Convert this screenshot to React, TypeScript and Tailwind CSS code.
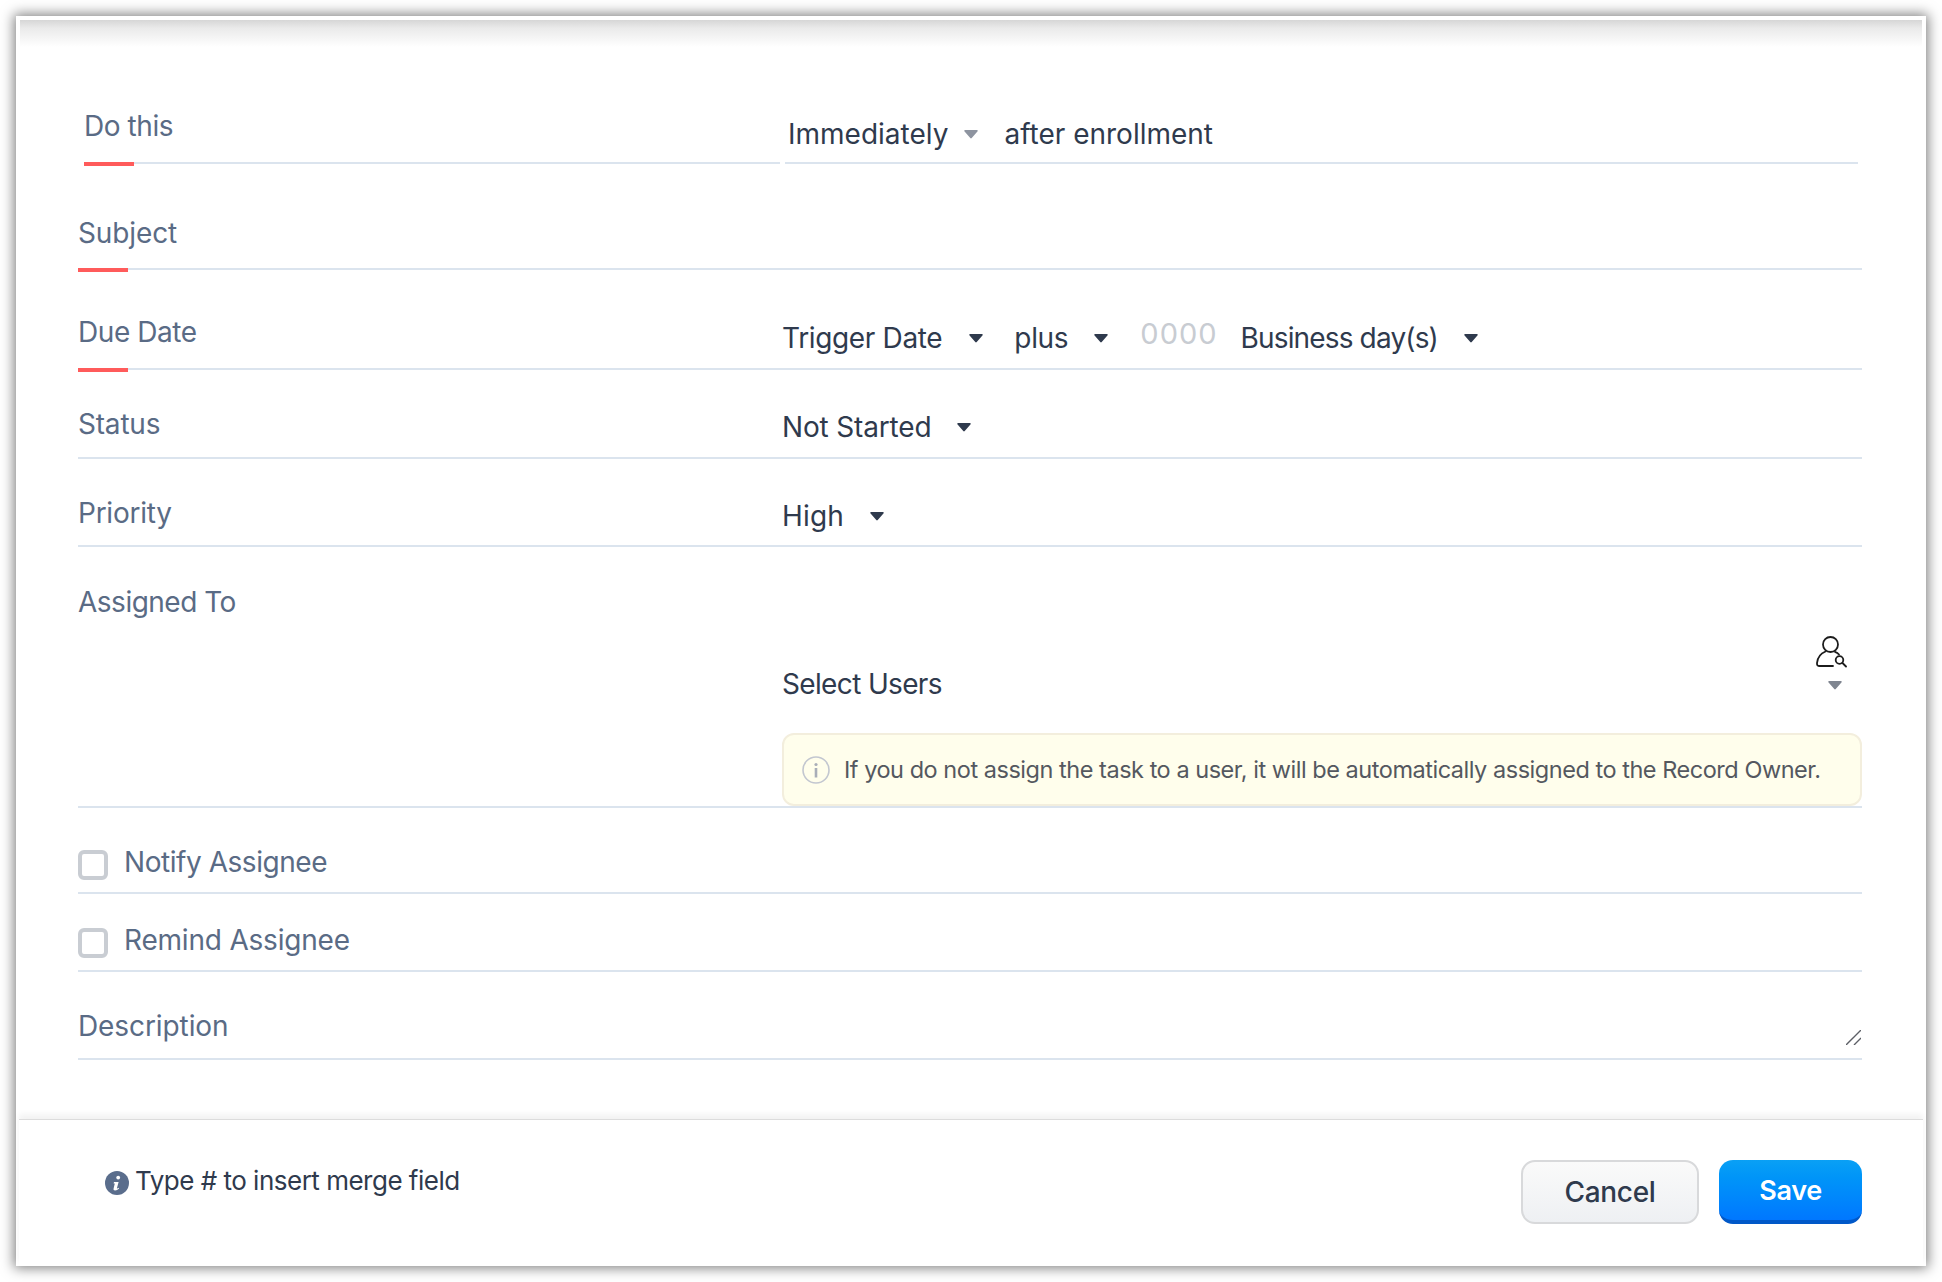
import React from 'react';

const Caret = ({ className = 'text-[#55647f]' }: { className?: string }) => (
  <svg viewBox="0 0 16 11" className={`h-[10px] w-[16px] shrink-0 ${className}`}>
    <path d="M1.5 1h13a1 1 0 0 1 .8 1.6L8.8 10a1 1 0 0 1-1.6 0L.7 2.6A1 1 0 0 1 1.5 1z" fill="currentColor" />
  </svg>
);

const RedBar = () => <div className="absolute bottom-[-4px] left-0 h-[4px] w-[50px] bg-[#ff5b5b]" />;

const Label = ({ children, className }: { children: React.ReactNode; className: string }) => (
  <div className={`w-[704px] shrink-0 text-[#5a6b85] ${className}`}>{children}</div>
);

const Checkbox = () => <div className="mr-[16px] h-[30px] w-[30px] shrink-0 rounded-[6px] border-4 border-[#c9cdd3] bg-white" />;

const App = () => {
  return (
    <div className="h-[1282px] w-[1942px] overflow-hidden bg-white pt-[16px] pl-[16px] font-['Inter',sans-serif] text-[28px] leading-[32px] tracking-[-0.3px]">
      <div className="flex h-[1250px] w-[1910px] flex-col bg-white shadow-[0_0_12px_2px_rgba(0,0,0,0.5)]">
        <div className="mx-[4px] mt-[4px] h-[27px] shrink-0 bg-gradient-to-b from-[#d6d6d6] via-[#eaeaea] via-30% to-white" />

        <div className="flex-1 pr-[64px] pl-[62px]">
          {/* Do this */}
          <div className="flex h-[117px] pr-[4px] pl-[6px]">
            <div className="relative w-[696px] shrink-0 border-b-2 border-[#dbe4ee] pt-[63px] tracking-[-0.42px] text-[#5a6b85]">
              Do this
              <RedBar />
            </div>
            <div className="ml-[5px] flex flex-1 items-start border-b-2 border-[#dbe4ee] pt-[71px] pl-[3px] tracking-normal text-[#2f3a4d]">
              <span>Immediately</span>
              <Caret className="mt-[11px] ml-[15px] text-[#8e94a0]" />
              <span className="ml-[25px]">after enrollment</span>
            </div>
          </div>

          {/* Subject */}
          <div className="relative h-[106px] border-b-2 border-[#dbe4ee] pt-[53px] tracking-[-0.12px] text-[#5a6b85]">
            Subject
            <RedBar />
          </div>

          {/* Due Date */}
          <div className="relative flex h-[100px] border-b-2 border-[#dbe4ee] text-[#2f3a4d]">
            <Label className="pt-[46px] tracking-[-0.42px]">Due Date</Label>
            <div className="flex items-start pt-[52px]">
              <span className="tracking-[-0.35px]">Trigger Date</span>
              <Caret className="mt-[11px] ml-[26px]" />
              <span className="ml-[30px]">plus</span>
              <Caret className="mt-[11px] ml-[25px]" />
              <span className="mt-[-4px] ml-[31px] text-[29px] tracking-[1px] text-[#c8ccd2]">0000</span>
              <span className="ml-[23px] tracking-[-0.85px]">Business day(s)</span>
              <Caret className="mt-[11px] ml-[25px]" />
            </div>
            <RedBar />
          </div>

          {/* Status */}
          <div className="flex h-[89px] border-b-2 border-[#dbe4ee] text-[#2f3a4d]">
            <Label className="pt-[38px] tracking-[-0.2px]">Status</Label>
            <div className="flex items-start pt-[41px]">
              <span className="tracking-[-0.16px]">Not Started</span>
              <Caret className="mt-[11px] ml-[25px]" />
            </div>
          </div>

          {/* Priority */}
          <div className="flex h-[88px] border-b-2 border-[#dbe4ee] text-[#2f3a4d]">
            <Label className="pt-[38px] tracking-[-0.25px]">Priority</Label>
            <div className="flex items-start pt-[41px]">
              <span className="tracking-[0.2px]">High</span>
              <Caret className="mt-[11px] ml-[25px]" />
            </div>
          </div>

          {/* Assigned To */}
          <div className="flex h-[261px] border-b-2 border-[#dbe4ee] text-[#2f3a4d]">
            <Label className="pt-[39px] tracking-[-0.5px]">Assigned To</Label>
            <div className="flex flex-1 flex-col">
              <div className="flex items-start justify-between pt-[89px]">
                <span className="mt-[32px] tracking-[-0.65px]">Select Users</span>
                <div className="mr-[15px] flex flex-col items-center">
                  <svg viewBox="0 0 31 33" className="h-[33px] w-[31px]" fill="none" stroke="#1c1c1c" strokeWidth="1.8" strokeLinecap="round">
                    <circle cx="14.5" cy="8.5" r="7.5" />
                    <path d="M9.5 15.5C4.5 17.5 1.5 22 1 27c-.1 2 .5 3 2 3h14" />
                    <path d="M19 15.8c1.5.6 3 1.5 4 2.7" />
                    <circle cx="23.5" cy="24" r="3.8" />
                    <path d="M26.5 27l3.5 3.5" />
                  </svg>
                  <Caret className="mt-[11px] ml-[7px] text-[#7f8590]" />
                </div>
              </div>
              <div className="mt-[33px] flex h-[74px] items-center rounded-[12px] border-2 border-[#f3eedd] bg-[#fffeec] pt-[1px] pl-[18px] text-[23.5px] tracking-[-0.47px] text-[#54585f]">
                <svg viewBox="0 0 28 28" className="mr-[14px] h-[28px] w-[28px] shrink-0" fill="none">
                  <circle cx="14" cy="14" r="13" stroke="#c3c7d0" strokeWidth="1.6" />
                  <circle cx="14" cy="8.5" r="1.6" fill="#a9aeb8" />
                  <rect x="12.7" y="12" width="2.6" height="9.5" fill="#a9aeb8" />
                </svg>
                If you do not assign the task to a user, it will be automatically assigned to the Record Owner.
              </div>
            </div>
          </div>

          {/* Notify Assignee */}
          <div className="flex h-[86px] items-start border-b-2 border-[#dbe4ee] pt-[42px] tracking-[-0.45px] text-[#5a6b85]">
            <Checkbox />
            <span className="mt-[-4px]">Notify Assignee</span>
          </div>

          {/* Remind Assignee */}
          <div className="flex h-[78px] items-start border-b-2 border-[#dbe4ee] pt-[34px] tracking-[-0.2px] text-[#5a6b85]">
            <Checkbox />
            <span className="mt-[-4px]">Remind Assignee</span>
          </div>

          {/* Description */}
          <div className="relative h-[88px] border-b-2 border-[#dbe4ee] pt-[38px] tracking-[-0.09px] text-[#5a6b85]">
            Description
            <svg viewBox="0 0 15 15" className="absolute right-[1px] bottom-[13px] h-[15px] w-[15px]" stroke="#5c5f66" strokeWidth="1.4">
              <path d="M0 15L15 0M8 15l7-7" />
            </svg>
          </div>
        </div>

        {/* Footer */}
        <div className="mx-[3px] flex h-[147px] shrink-0 items-start justify-between border-t border-[#dcdcdc] pr-[61px] pl-[86px] shadow-[0_-5px_6px_rgba(0,0,0,0.05)]">
          <div className="flex items-center pt-[45px] text-[26px] tracking-[-0.5px] text-[#2f3a4d]">
            <svg viewBox="0 0 24 24" className="mt-[4px] mr-[6px] h-[24px] w-[24px]">
              <circle cx="12" cy="12" r="12" fill="#5a6d8c" />
              <circle cx="13.2" cy="6.6" r="1.9" fill="#fff" />
              <path d="M9 11h4.6l-1.7 6.2c-.1.5.4.6 1.9-.4l.3.7c-1.3 1.3-2.7 2-4 2-1.4 0-1.8-.8-1.5-2l1.2-4.9H8.6z" fill="#fff" />
            </svg>
            Type # to insert merge field
          </div>
          <div className="flex pt-[40px]">
            <button className="h-[64px] w-[178px] rounded-[14px] border-2 border-[#d8d9db] bg-gradient-to-b from-[#fafafa] to-[#eef0f3] text-[28px] font-medium text-[#2f3a4d]">
              Cancel
            </button>
            <button className="ml-[20px] h-[64px] w-[143px] rounded-[14px] border-b-4 border-[#0058c8] bg-gradient-to-b from-[#0aa0f5] to-[#0077ff] pt-[2px] text-[27px] font-semibold text-white">
              Save
            </button>
          </div>
        </div>
      </div>
    </div>
  );
};

export default App;
